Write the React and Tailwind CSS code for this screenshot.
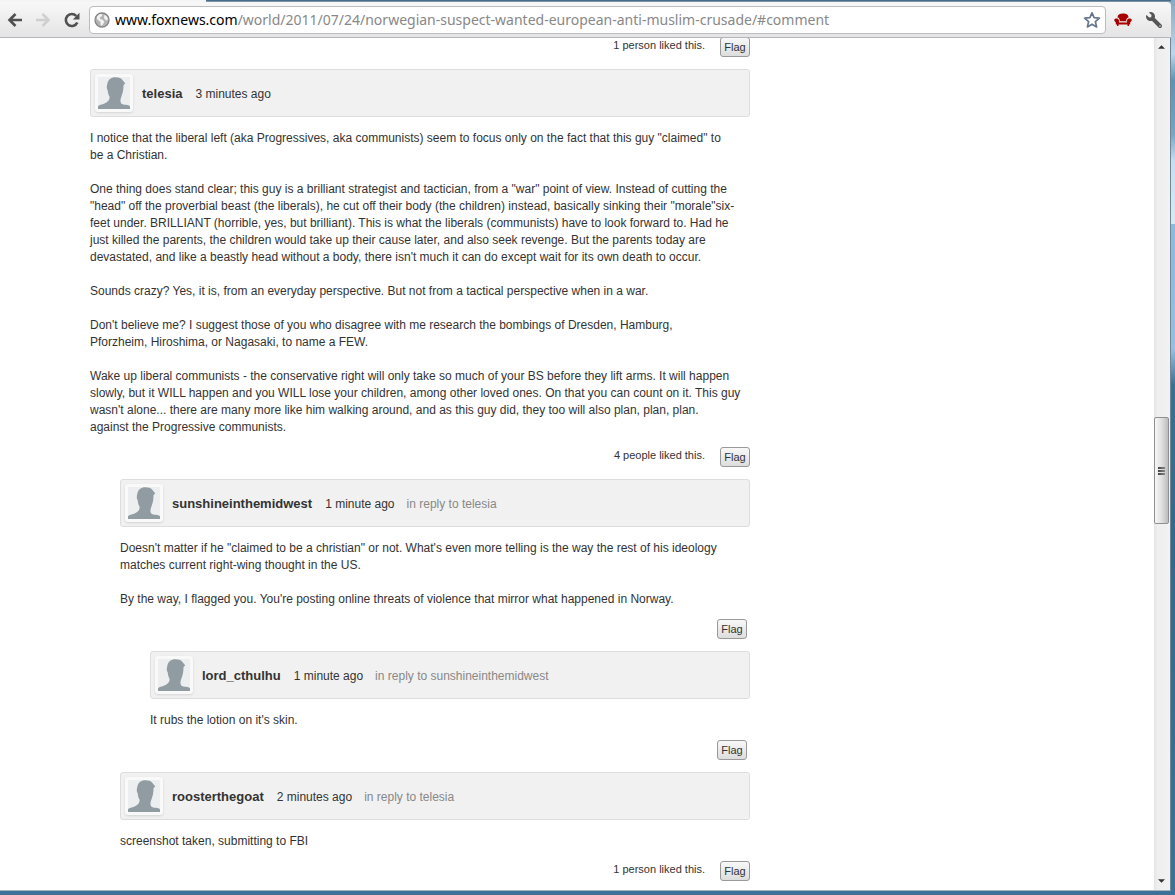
import { FaWrench } from 'react-icons/fa';

const COMMENTS = [
  {
    id: 1,
    author: 'telesia',
    time: '3 minutes ago',
    level: 0,
    likes: '4 people liked this.',
    body: [
      'I notice that the liberal left (aka Progressives, aka communists) seem to focus only on the fact that this guy "claimed" to\nbe a Christian.',
      'One thing does stand clear; this guy is a brilliant strategist and tactician, from a "war" point of view. Instead of cutting the\n"head" off the proverbial beast (the liberals), he cut off their body (the children) instead, basically sinking their "morale"six-feet under. BRILLIANT (horrible, yes, but brilliant). This is what the liberals (communists) have to look forward to. Had he\njust killed the parents, the children would take up their cause later, and also seek revenge. But the parents today are\ndevastated, and like a beastly head without a body, there isn\'t much it can do except wait for its own death to occur.',
      'Sounds crazy? Yes, it is, from an everyday perspective. But not from a tactical perspective when in a war.',
      'Don\'t believe me? I suggest those of you who disagree with me research the bombings of Dresden, Hamburg,\nPforzheim, Hiroshima, or Nagasaki, to name a FEW.',
      'Wake up liberal communists - the conservative right will only take so much of your BS before they lift arms. It will happen\nslowly, but it WILL happen and you WILL lose your children, among other loved ones. On that you can count on it. This guy\nwasn\'t alone... there are many more like him walking around, and as this guy did, they too will also plan, plan, plan.\nagainst the Progressive communists.',
    ],
  },
  {
    id: 2,
    author: 'sunshineinthemidwest',
    time: '1 minute ago',
    replyTo: 'telesia',
    level: 1,
    body: [
      'Doesn\'t matter if he "claimed to be a christian" or not. What\'s even more telling is the way the rest of his ideology\nmatches current right-wing thought in the US.',
      'By the way, I flagged you. You\'re posting online threats of violence that mirror what happened in Norway.',
    ],
  },
  {
    id: 3,
    author: 'lord_cthulhu',
    time: '1 minute ago',
    replyTo: 'sunshineinthemidwest',
    level: 2,
    body: ['It rubs the lotion on it\'s skin.'],
  },
  {
    id: 4,
    author: 'roosterthegoat',
    time: '2 minutes ago',
    replyTo: 'telesia',
    level: 1,
    likes: '1 person liked this.',
    body: ['screenshot taken, submitting to FBI'],
  },
];

const INDENT = ['', 'ml-[30px]', 'ml-[60px]'];

function Avatar() {
  return (
    <div className="w-[38px] h-[38px] p-[3px] rounded-[3px] bg-[#f9f9f9] shadow-sm shrink-0">
      <svg viewBox="0 0 32 32" className="w-8 h-8 bg-[#eceeef]" aria-hidden="true">
        <path fill="#919ca2" d="M0 32v-2.800c2-1.700 5.500-1.900 8-3.400 2.500-1.500 3.800-3.300 3.600-6-1.200-2-1.700-4.300-1.900-6.600C8.500 12 8.600 9 9.300 7 10.200 2.500 13 .3 17.200.3c4 0 6.500 1 8 3.700l2 2.300-1.700 2c0 4-.7 8-2 11-1 2.700-1.700 5.200-.3 7.200 2 1.700 7.600 1 8.800 2.700V32z" />
      </svg>
    </div>
  );
}

function CommentFooter({ likes }) {
  return (
    <div className={likes ? 'flex justify-end items-start h-5' : 'flex justify-end items-start h-5 pr-[3px]'}>
      {likes && <span className="mr-[15px] text-[11px] leading-4">{likes}</span>}
      <button className="h-5 w-[30px] text-[11px] leading-4 text-[#333] rounded-[3px] border border-[#999] bg-linear-to-b from-[#f8f8f8] to-[#dddddd]">Flag</button>
    </div>
  );
}

function Comment({ comment }) {
  const { author, time, replyTo, level, likes, body } = comment;
  return (
    <article className={INDENT[level]}>
      <header className="mt-3 h-12 px-1 flex items-center rounded-[3px] border border-[#dddddd] bg-[#f1f1f1]">
        <Avatar />
        <div className="ml-[9px] pt-0.5 flex items-center text-[12px]">
          <a href="#author" className="text-[13px] font-bold">{author}</a>
          <span className="ml-[13px]">{time}</span>
          {replyTo && <a href="#parent" className="ml-3 text-[#888]">in reply to {replyTo}</a>}
        </div>
      </header>
      <div className="mt-[13px] mb-[11px] flex flex-col gap-[17px] text-[12px] leading-[17px] whitespace-pre-line">
        {body.map((text, i) => <p key={i}>{text}</p>)}
      </div>
      <CommentFooter likes={likes} />
    </article>
  );
}

function Toolbar() {
  return (
    <div className="h-9 shrink-0 flex items-center pl-[7px] pr-[9px] rounded-tr-[4px] border-b border-[#b4b4ba] bg-linear-to-b from-[#f8f8f8] to-[#e4e4e4]">
      <button aria-label="Back">
        <svg viewBox="0 0 16 16" className="w-4 h-4" fill="none" stroke="#505050" strokeWidth="2.600">
          <path d="M15 8H3M8.500 2L2.500 8l6 6" />
        </svg>
      </button>
      <button aria-label="Forward" className="ml-3">
        <svg viewBox="0 0 16 16" className="w-4 h-4" fill="none" stroke="#cfcfcf" strokeWidth="2.600">
          <path d="M1 8h12M7.500 2l6 6-6 6" />
        </svg>
      </button>
      <button aria-label="Reload" className="ml-[13px]">
        <svg viewBox="0 0 16 16" className="w-4 h-4">
          <path d="M13.300 10.500A6 6 0 1 1 12.300 4" fill="none" stroke="#505050" strokeWidth="2.600" />
          <path d="M15.500.800v6.700H8.800z" fill="#505050" />
        </svg>
      </button>
      <div className="ml-[9px] flex-1 h-7 flex items-center px-1 rounded-[4px] border border-[#bdbdbd] bg-white">
        <svg viewBox="0 0 16 16" className="w-4 h-4 shrink-0" aria-hidden="true">
          <circle cx="8" cy="8" r="7" fill="#b4b4b4" stroke="#858585" strokeWidth="1.300" />
          <path fill="#f2f2f2" d="M3 4.500L5.500 2l3 .3-.8 2-2 1.200.5 1.500 2.300.7 1.800 1.800-1 2.200-1.500 2.300-1.300-1.500V10L4.800 8.500 3 7zM10.500 2.800l2.200 1.500 1.300 3-1.500 1.200-2-1.500-.5-2z" />
        </svg>
        <div className="flex-1 ml-[5px] h-6 text-[14px] leading-6 font-['Noto_Sans',sans-serif] text-[#888]">
          <span className="text-black">www.foxnews.com</span>/world/2011/07/24/norwegian-suspect-wanted-european-anti-muslim-crusade/#comment
        </div>
        <button aria-label="Bookmark this page">
          <svg viewBox="0 0 18 18" className="w-[18px] h-[18px]">
            <path d="M9 1.800l2.100 4.900 5.300.5-4 3.500 1.200 5.200L9 13.200l-4.600 2.700 1.200-5.200-4-3.500 5.300-.5z" fill="#fff" stroke="#66758f" strokeWidth="1.700" strokeLinejoin="round" />
          </svg>
        </button>
      </div>
      <button aria-label="Sofa" className="ml-2">
        <svg viewBox="0 0 18 14" className="w-[18px] h-3.5">
          <path fill="#a80000" d="M3.500 4.500C3.500 1.600 5.500.5 9 .5s5.500 1.100 5.500 4c-1.500.3-2.200 1.300-2.300 3.500H5.800c-.1-2.200-.8-3.200-2.300-3.500z" />
          <path fill="#a80000" d="M.2 7C.2 5 4.600 4.700 4.900 7.200v1.600h8.200V7.200c.3-2.500 4.700-2.200 4.700-.2 0 1.300-1.300 1.600-1.600 2.500v2H15V13h-1.500v-1.500h-9V13H3v-1.500H1.800v-2C1.500 8.600.2 8.300.2 7z" />
          <path d="M5 9.300h8" stroke="#eee" strokeWidth=".6" />
        </svg>
      </button>
      <button aria-label="Settings" className="ml-3.5">
        <FaWrench className="w-4 h-4 -scale-x-100 text-[#555]" />
      </button>
    </div>
  );
}

function Scrollbar() {
  return (
    <div className="w-4 shrink-0 flex flex-col items-center pr-px bg-linear-to-r from-[#e4e4e4] via-[#eeeeee] via-20% to-[#f2f2f2]" aria-hidden="true">
      <svg viewBox="0 0 8 4" className="mt-[7px] w-[7px] h-1 shrink-0"><path d="M4 0l4 4H0z" fill="#333" /></svg>
      <div className="grow-[369]" />
      <div className="h-[107px] w-full flex flex-col items-center justify-center gap-px rounded-[2px] border border-[#8f8f8f] bg-linear-to-r from-[#f7f7f7] via-[#e0e0e0] to-[#bcbcbc]">
        <i className="w-[7px] h-0.5 bg-linear-to-r from-[#444] to-[#888]" />
        <i className="w-[7px] h-0.5 bg-linear-to-r from-[#444] to-[#888]" />
        <i className="w-[7px] h-0.5 bg-linear-to-r from-[#444] to-[#888]" />
      </div>
      <div className="grow-[355]" />
      <svg viewBox="0 0 8 4" className="mb-[7px] w-[7px] h-1 shrink-0"><path d="M0 0h8L4 4z" fill="#333" /></svg>
    </div>
  );
}

export default function App() {
  return (
    <div className="h-screen flex flex-col overflow-hidden pr-1 pb-1 bg-[linear-gradient(#86a9c4_0%,#bdd6ea_6%,#5f92b5_9%,#76a5c5_15%,#c9ddf0_18%,#dce8f2_25%,#90b7de_25%,#9bbde4_39%,#3b7092_43%,#34688f_60%,#3c7299_100%)] font-['Liberation_Sans',Arial,sans-serif] text-[#333]">
      <div className="h-0.5 shrink-0 flex">
        <div className="w-[206px] bg-[#f4f4f4]" />
        <div className="flex-1 bg-[#476f8b] border-b border-[#7b93a3]" />
      </div>
      <Toolbar />
      <div className="flex-1 min-h-0 flex bg-white border-r border-b border-r-[#6b8799] border-b-[#a9b3bb]">
        <main className="flex-1 overflow-hidden pl-[90px]">
          <div className="max-w-[660px] -mt-px">
            <CommentFooter likes="1 person liked this." />
            {COMMENTS.map(c => <Comment key={c.id} comment={c} />)}
          </div>
        </main>
        <Scrollbar />
      </div>
    </div>
  );
}
